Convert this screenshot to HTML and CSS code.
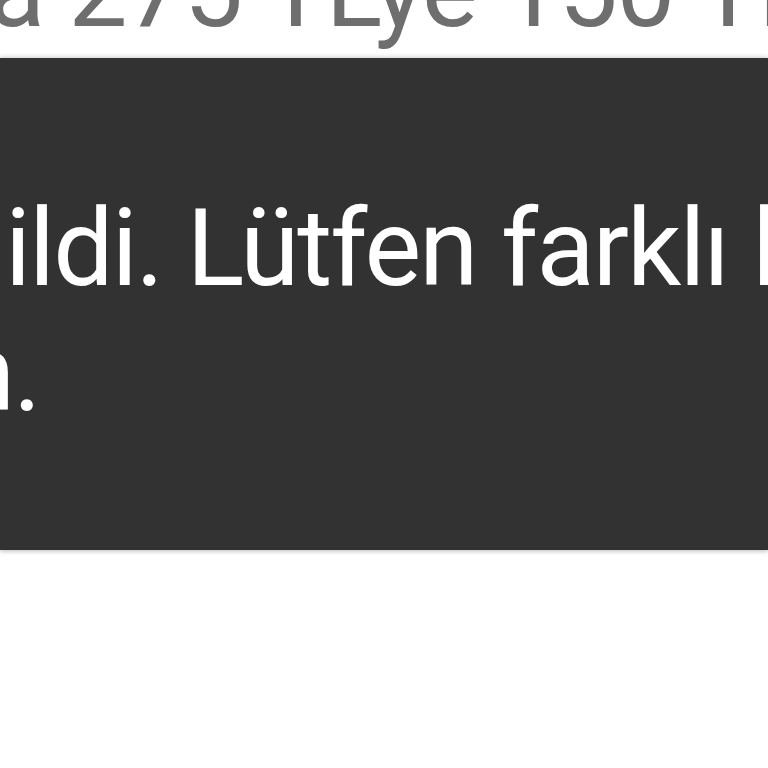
FILE: index.html
```html
<!DOCTYPE html>
<html>
<head>
<meta charset="utf-8">
<link rel="stylesheet" href="styles.css">
</head>
<body>
<div class="page">
  <div class="behind"><span class="behind-text">a 275 TLye 150 TLye</span></div>
  <div class="snackbar">
    <div class="line line1">ildi. Lütfen farklı bir</div>
    <div class="line line2">n.</div>
  </div>
</div>
</body>
</html>
```
FILE: styles.css
```css
html, body {
  margin: 0;
  padding: 0;
  background: #ffffff;
  overflow: hidden;
}
.page {
  width: 768px;
  height: 768px;
  overflow: hidden;
  font-family: Roboto, "Noto Sans", sans-serif;
}
.behind {
  height: 129px;
  margin-top: -71px;
  white-space: nowrap;
  overflow: hidden;
}
.behind-text {
  display: block;
  font-size: 105px;
  line-height: 123px;
  color: #6e6e6e;
  margin-left: -12px;
  letter-spacing: -1.3px;
}
.snackbar {
  background: #323232;
  padding: 128px 0 114px 0;
  box-shadow: 0 -2px 4px rgba(0,0,0,0.12), 0 2px 4px rgba(0,0,0,0.2);
}
.line {
  font-size: 107px;
  line-height: 125px;
  color: #ffffff;
  white-space: nowrap;
  overflow: hidden;
  letter-spacing: -1.9px;
}
.line1 {
  padding-left: 5px;
}
.line2 {
  margin-left: -44px;
}
```
